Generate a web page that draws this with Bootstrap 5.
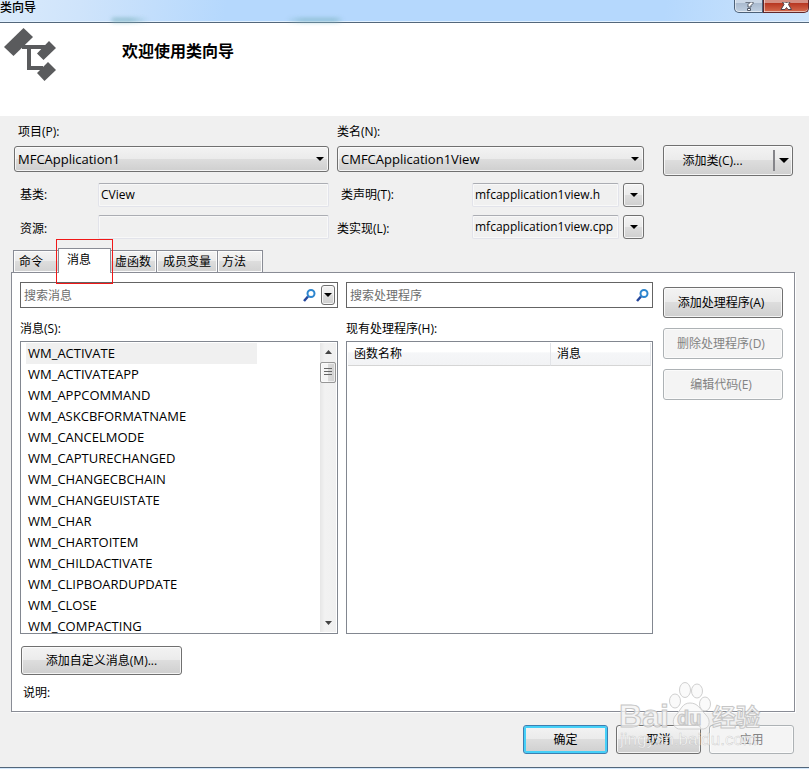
<!DOCTYPE html>
<html lang="zh-CN">
<head>
<meta charset="utf-8">
<meta name="viewport" content="width=device-width, initial-scale=1">
<title>类向导</title>
<link href="https://cdn.jsdelivr.net/npm/bootstrap@5.3.0/dist/css/bootstrap.min.css" rel="stylesheet">
<style>
body{font:12px/20px "Open Sans","Noto Sans CJK SC",sans-serif;color:#000;background:#f0f0f0;min-height:100vh}
.titlebar{height:23px;background:linear-gradient(100deg,#d9eafb 0,#cfe4fb 10%,#b5d8fd 28%,#b5d8fd 82%,#cde4fc 100%);border-bottom:1px solid #53677b;box-shadow:inset 0 -1px #e2f1ff}
.titlebar h1{font-size:12px;line-height:16px;margin:0}
.smudge{left:112px;top:18px;width:232px;height:4px;background:linear-gradient(90deg,#7fb4c0 0 8%,transparent 16% 75%,#84b8c8 82% 96%,transparent);filter:blur(2px);opacity:.8}
.winbtn{height:13px;border:1px solid #4b6078;border-top:0;padding:0;line-height:0;box-shadow:inset 0 -1px #ffffff90,inset 1px 0 #ffffff80}
.winhelp{width:29px;border-radius:0 0 0 5px;background:linear-gradient(#cbd8e7 0 25%,#a9bace 25%,#c0d0e2)}
.winclose{width:46px;border-color:#61272a;border-radius:0 0 5px 0;background:linear-gradient(#d58f83 0 25%,#b63520 25%,#d66b4e)}
.banner{height:93px;padding:4px 3px}
.banner h2{font-size:16px;line-height:20px;font-weight:700;margin:14px 0 0 64px}
.topgrid{display:grid;grid-template-columns:minmax(0,315fr) minmax(0,307fr) 141px;column-gap:8px;padding:6px 16px 4px 14px}
.glass{font:inherit;color:#000;border:1px solid #707070;border-radius:3px;background:linear-gradient(#f3f3f3,#ebebeb 48%,#dddddd 50%,#cfcfcf);box-shadow:inset 0 0 0 1px #fcfcfccc;padding:0}
.glass:hover{border-color:#3c7fb1;color:#000}
.glass:disabled{background:#f4f4f4;border-color:#adb2b5;color:#838383;opacity:1}
.glass.okbtn{border-color:#3c7fb1;box-shadow:inset 0 0 0 2px #46d0f8}
.combo{height:26px;font-size:13px;line-height:20px;padding:1px 20px 1px 3px;color:#000;border:1px solid #707070;border-radius:3px;box-shadow:inset 0 0 0 1px #fcfcfccc;background:url("data:image/svg+xml,%3Csvg xmlns='http://www.w3.org/2000/svg' width='8' height='4'%3E%3Cpath d='M0 0h8L4 4z'/%3E%3C/svg%3E") right 4px center/8px 4px no-repeat,linear-gradient(#f3f3f3,#ebebeb 48%,#dddddd 50%,#cfcfcf)}
.fieldrow{height:34px}
.fieldrow+.fieldrow label{padding-top:4px}
.ro{height:24px;font-size:12px;line-height:20px;padding:0 2px 1px;color:#000;border:1px solid #e2e3ea;border-top-color:#abadb3;border-radius:2px;background:#f0f0f0;box-shadow:inset 0 0 0 1px #f8f8f8;min-width:0}
.ro:focus{background:#f0f0f0}
.leftlab{width:84px;padding-left:6px}
.rightlab{width:135px}
.drop{width:21px;height:24px}
.arrow{display:block;margin:auto}
.addwrap{padding:23px 0 0 11px}
.addclass{height:31px}
.addclass .halfmain{border:0;background:none;padding:0 12px 0 0}
.addclass .halfdrop{width:19px;height:21px;border:0;border-left:2px solid #85858a;background:none;padding:0}
.tabs{margin-left:13px;height:24px}
.tabitem{font:inherit;color:#000;height:22px;border:1px solid #898c95;border-bottom:0;padding:0 4px;background:linear-gradient(#f3f3f3,#ebebeb 48%,#dddddd 50%,#d2d2d2);box-shadow:inset 0 0 0 1px #fcfcfc}
.tabitem+.tabitem{margin-left:-1px}
.tabitem.tabitem.active{height:25px;width:53px;margin:0 -1px -1px -2px;padding:0 8px 2px;text-align:left;background:#fff;box-shadow:none;z-index:1;position:relative}
.t1{width:47px;text-align:left;padding-left:5px}.t3{width:48px}.t4{width:62px}.t5{width:46px;text-align:left}
.redbox{left:-3px;top:-10px;width:57px;height:45px;border:1px solid #f01818;pointer-events:none}
.panel{margin:0 14px 0 11px;border:1px solid #898c95;background:#fff;padding:9px 11px 8px 8px;box-shadow:1px 1px #fff}
.cols{display:grid;grid-template-columns:minmax(0,318fr) minmax(0,307fr) 122px;column-gap:8px}
.searchbox{height:26px;border:1px solid #646464;background:#fff;padding:0 3px}
.searchbox input{font:inherit;border:0;padding:0;outline:0;box-shadow:none;min-width:0;height:24px}
.searchbox input::placeholder{color:#6d6d6d;opacity:1}
.searchbox .drop{width:14px;height:20px;margin-left:5px;margin-right:-1px}
.listlab{height:33px;padding-top:11px}
.listframe{height:293px;border:1px solid #828790;background:#fff;overflow:hidden}
.msgs{font-size:13px;line-height:21px;padding:1px 0 0 5px;overflow:hidden}
.msgs li{border:0;padding:0 2px;height:21px;background:none;color:#000;max-width:231px;white-space:nowrap}
.msgs li.cur{background:#f0f0f0}
.sbar{width:16px;margin:1px;background:linear-gradient(90deg,#e6e6e6,#f2f2f2 30%,#f0f0f0);padding:7px 0}
.thumb{width:16px;height:21px;margin-top:8px;border:1px solid #979797;border-radius:2px;background:linear-gradient(90deg,#f5f5f5 48%,#dcdcdc 50%,#d0d0d0);box-shadow:inset 0 0 0 1px #fff9}
.handlers{margin:1px;width:calc(100% - 2px);border-collapse:separate;border-spacing:0}
.handlers th{height:23px;font-weight:400;padding:0 6px;background:linear-gradient(#fff 40%,#f5f6f8 45%,#f2f3f5);border-bottom:1px solid #d5d5d5;border-right:1px solid #e2e4e8}
.handlers th:first-child{width:67%}
.sidebtns{padding:5px 0 0 2px;row-gap:10px}
.sidebtns .glass{height:31px;padding-right:4px}
.custom{width:161px;height:29px;margin:12px 0 0 1px}
.desc{padding:8px 0 0 3px}
.foot{padding:13px 15px 13px}
.foot .glass{width:85px;height:29px}
.winbottom{height:2px;border-top:1px solid #53677b;background:#d3e7fb}
.wmark{right:44px;bottom:14px;width:150px;height:78px;pointer-events:none}
</style>
<script src="https://cdn.jsdelivr.net/npm/bootstrap@5.3.0/dist/js/bootstrap.bundle.min.js"></script>
</head>
<body class="d-flex flex-column position-relative">
<header class="titlebar d-flex justify-content-between align-items-start position-relative">
  <h1>类向导</h1>
  <span class="smudge position-absolute"></span>
  <div class="d-flex">
    <button class="winbtn winhelp" aria-label="帮助"><svg width="12" height="9" viewBox="0 0 12 9"><path d="M2.500 0h2.500c2 0 2 0 2 .5L5 2.500V5h3V3.500l2-2V0z" fill="#fff" stroke="#505866"/><path d="M4.500 6.500h3v2h-3z" fill="#fff" stroke="#505866"/></svg></button>
    <button class="winbtn winclose" aria-label="关闭"><svg width="14" height="9" viewBox="0 0 14 9"><path d="M3.500 0 5 2.500 2 7.500h4l1.500-2 1.500 2h3.500L9.500 2.500 11 0H8.500L7.500 1 6.500 0z" fill="#fff" stroke="#50424a"/></svg></button>
  </div>
</header>
<section class="banner bg-white d-flex">
  <svg width="55" height="56" viewBox="3 27 55 56" fill="#5a5b5d" aria-hidden="true"><path d="M23.500 28 33 37 13.500 56 4 47z"/><path d="M49 41l7 7-12.500 12L37 53.500zM48 62l8 8-11.500 11L37 73z"/><path d="M22 45h24v4H31v17h12v4H27V49h-5z"/></svg>
  <h2>欢迎使用类向导</h2>
</section>
<main>
  <form class="topgrid" onsubmit="return false">
    <div>
      <label class="d-block mb-1 px-1" for="proj">项目(P):</label>
      <select id="proj" class="combo form-select"><option>MFCApplication1</option></select>
      <div class="fieldrow d-flex align-items-center mt-1 pt-1"><label class="leftlab flex-shrink-0" for="base">基类:</label><input id="base" class="ro form-control" value="CView" readonly></div>
      <div class="fieldrow d-flex align-items-center"><label class="leftlab flex-shrink-0" for="res">资源:</label><input id="res" class="ro form-control" readonly></div>
    </div>
    <div>
      <label class="d-block mb-1" for="cls">类名(N):</label>
      <select id="cls" class="combo form-select"><option>CMFCApplication1View</option></select>
      <div class="fieldrow d-flex align-items-center mt-1 pt-1"><label class="rightlab ps-1 flex-shrink-0" for="decl">类声明(T):</label><input id="decl" class="ro form-control me-1" value="mfcapplication1view.h" readonly><button class="glass drop flex-shrink-0" aria-label="声明文件"><svg class="arrow" width="8" height="4"><path d="M0 0h8L4 4z"/></svg></button></div>
      <div class="fieldrow d-flex align-items-center"><label class="rightlab flex-shrink-0" for="impl">类实现(L):</label><input id="impl" class="ro form-control me-1" value="mfcapplication1view.cpp" readonly><button class="glass drop flex-shrink-0" aria-label="实现文件"><svg class="arrow" width="8" height="4"><path d="M0 0h8L4 4z"/></svg></button></div>
    </div>
    <div class="addwrap">
      <div class="addclass glass d-flex align-items-center"><button class="halfmain flex-fill">添加类(C)...</button><button class="halfdrop" aria-label="更多添加方式"><svg class="arrow" width="10" height="5"><path d="M0 0h10L5 5z"/></svg></button></div>
    </div>
  </form>
  <div class="tabs d-flex align-items-end" role="tablist">
    <button class="tabitem t1" role="tab">命令</button>
    <button class="tabitem active" role="tab" aria-selected="true">消息<span class="redbox position-absolute"></span></button>
    <button class="tabitem t3" role="tab">虚函数</button>
    <button class="tabitem t4" role="tab">成员变量</button>
    <button class="tabitem t5" role="tab">方法</button>
  </div>
  <section class="panel" role="tabpanel">
    <div class="cols">
      <div>
        <div class="searchbox d-flex align-items-center"><input class="flex-fill" placeholder="搜索消息" aria-label="搜索消息"><svg width="13" height="13" viewBox="0 0 13 13" fill="none"><path d="M1 12l4-4.500" stroke="#26479c" stroke-width="2.500"/><circle cx="8" cy="4.500" r="3.500" stroke="#2d86cf" stroke-width="2"/></svg><button class="glass drop" aria-label="搜索选项"><svg class="arrow" width="8" height="4"><path d="M0 0h8L4 4z"/></svg></button></div>
        <div class="listlab">消息(S):</div>
        <div class="listframe d-flex">
          <ul class="msgs list-group list-group-flush flex-fill m-0">
            <li class="list-group-item cur">WM_ACTIVATE</li><li class="list-group-item">WM_ACTIVATEAPP</li><li class="list-group-item">WM_APPCOMMAND</li><li class="list-group-item">WM_ASKCBFORMATNAME</li><li class="list-group-item">WM_CANCELMODE</li><li class="list-group-item">WM_CAPTURECHANGED</li><li class="list-group-item">WM_CHANGECBCHAIN</li><li class="list-group-item">WM_CHANGEUISTATE</li><li class="list-group-item">WM_CHAR</li><li class="list-group-item">WM_CHARTOITEM</li><li class="list-group-item">WM_CHILDACTIVATE</li><li class="list-group-item">WM_CLIPBOARDUPDATE</li><li class="list-group-item">WM_CLOSE</li><li class="list-group-item">WM_COMPACTING</li>
          </ul>
          <div class="sbar d-flex flex-column flex-shrink-0">
            <svg class="mx-auto" width="7" height="4"><path d="M0 4h7L3.500 0z" fill="#444"/></svg>
            <div class="thumb d-flex align-items-center justify-content-center"><svg width="8" height="9"><path d="M0 .5h8M0 3.500h8M0 6.500h8" stroke="#666"/></svg></div>
            <svg class="mx-auto mt-auto" width="7" height="4"><path d="M0 0h7L3.500 4z" fill="#444"/></svg>
          </div>
        </div>
      </div>
      <div>
        <div class="searchbox d-flex align-items-center"><input class="flex-fill" placeholder="搜索处理程序" aria-label="搜索处理程序"><svg width="13" height="13" viewBox="0 0 13 13" fill="none"><path d="M1 12l4-4.500" stroke="#26479c" stroke-width="2.500"/><circle cx="8" cy="4.500" r="3.500" stroke="#2d86cf" stroke-width="2"/></svg></div>
        <div class="listlab">现有处理程序(H):</div>
        <div class="listframe"><table class="handlers"><thead><tr><th scope="col">函数名称</th><th scope="col">消息</th></tr></thead></table></div>
      </div>
      <div class="sidebtns d-grid align-content-start">
        <button class="glass">添加处理程序(A)</button><button class="glass" disabled>删除处理程序(D)</button><button class="glass" disabled>编辑代码(E)</button>
      </div>
    </div>
    <button class="glass custom d-block">添加自定义消息(M)...</button>
    <div class="desc">说明:</div>
  </section>
</main>
<footer class="foot d-flex justify-content-end gap-2">
  <button class="glass okbtn">确定</button><button class="glass">取消</button><button class="glass" disabled>应用</button>
</footer>
<div class="winbottom"></div>
<svg class="wmark position-absolute" viewBox="0 0 150 78" aria-hidden="true">
  <g fill="#f8f8f8" fill-opacity=".7" stroke="#d0d0d0"><ellipse cx="60" cy="24" rx="5.500" ry="7"/><ellipse cx="70" cy="13" rx="5.500" ry="7.500"/><ellipse cx="82" cy="14" rx="5.500" ry="7"/><ellipse cx="90" cy="27" rx="5.500" ry="7"/><path d="M75 26c-8 0-9 7-14 12s-3 15 5 14h20c8 1 11-8 5-14s-8-12-16-12z"/></g>
  <g font-family="Liberation Sans,Noto Sans CJK SC,sans-serif" font-weight="700" fill="#f4f4f4" fill-opacity=".8" stroke="#c6c6c6" stroke-width="1"><text x="4" y="50" font-size="32">Bai</text><text x="62" y="48" font-size="20" fill="#ddd">du</text><text x="97" y="49" font-size="24">经验</text></g>
  <text x="5" y="68" font-family="Liberation Sans,sans-serif" font-size="17" fill="#fff" fill-opacity=".8" stroke="#bbb" stroke-width=".5" stroke-opacity=".7">jingyan.baidu.com</text>
</svg>
</body>
</html>
